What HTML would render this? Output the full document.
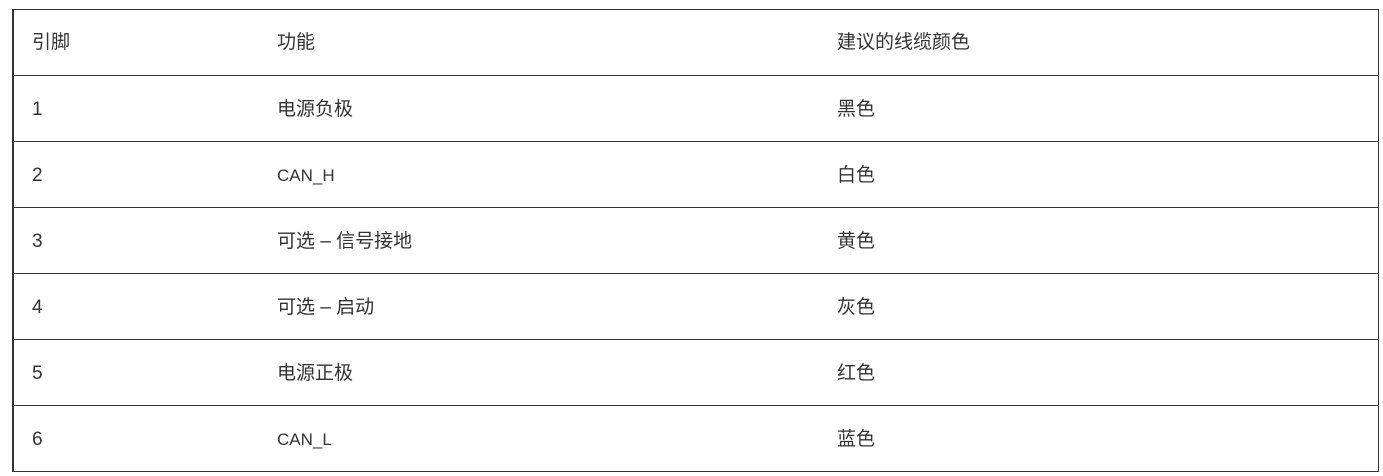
<!DOCTYPE html>
<html><head><meta charset="utf-8"><style>
body{margin:0;width:1383px;height:476px;background:#fff;overflow:hidden;font-family:"Liberation Sans","Noto Sans CJK SC",sans-serif;font-size:19px;color:#333}
.t{position:absolute;left:12px;top:9px;width:1364px;height:461px;border:1px solid #333;border-left-width:2px}
.r{position:absolute;left:0;width:1364px;height:66px;border-top:1px solid #333;box-sizing:border-box}
.c{position:absolute;top:1px;line-height:65px;white-space:nowrap}
.s{font-size:17px}
</style></head><body>
<div class="t">
<div class="r" style="top:-1px;border-top:none"><span class="c" style="left:18px">引脚</span><span class="c" style="left:263px">功能</span><span class="c" style="left:823px">建议的线缆颜色</span></div>
<div class="r" style="top:65px"><span class="c" style="left:18px">1</span><span class="c" style="left:263px">电源负极</span><span class="c" style="left:823px">黑色</span></div>
<div class="r" style="top:131px"><span class="c" style="left:18px">2</span><span class="c s" style="left:263px">CAN_H</span><span class="c" style="left:823px">白色</span></div>
<div class="r" style="top:197px"><span class="c" style="left:18px">3</span><span class="c" style="left:263px">可选 – 信号接地</span><span class="c" style="left:823px">黄色</span></div>
<div class="r" style="top:263px"><span class="c" style="left:18px">4</span><span class="c" style="left:263px">可选 – 启动</span><span class="c" style="left:823px">灰色</span></div>
<div class="r" style="top:329px"><span class="c" style="left:18px">5</span><span class="c" style="left:263px">电源正极</span><span class="c" style="left:823px">红色</span></div>
<div class="r" style="top:395px"><span class="c" style="left:18px">6</span><span class="c s" style="left:263px">CAN_L</span><span class="c" style="left:823px">蓝色</span></div>
</div>
</body></html>
